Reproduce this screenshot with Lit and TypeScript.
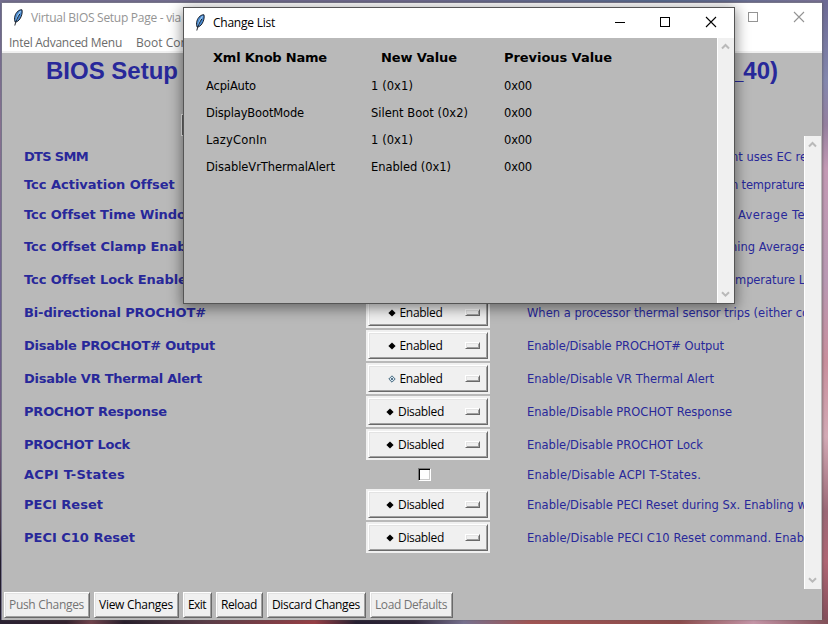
import { LitElement, html, css, svg } from "lit";
import { customElement, property } from "lit/decorators.js";

/** One line of text whose tracking is adjusted to fill a given advance width. */
@customElement("fit-text")
class FitText extends LitElement {
  @property() text = "";
  @property({ type: Number }) w = 0;
  static styles = css`
    :host { display: inline-block; white-space: pre; flex: none; }
    span { display: inline-block; }
  `;
  render() {
    return html`<span>${this.text}</span>`;
  }
  updated() {
    const el = this.renderRoot.querySelector("span")!;
    el.style.letterSpacing = "0px";
    const natural = el.getBoundingClientRect().width;
    if (this.w && this.text.length) {
      el.style.letterSpacing = (this.w - natural) / this.text.length + "px";
    }
  }
}

const t = (text: string, w: number) => html`<fit-text .text=${text} .w=${w}></fit-text>`;

const feather = html`<svg class="feather" width="12" height="18" viewBox="0 0 12 18">
  <path d="M3.200 13.200C1.600 9.500 3 4.500 6 2.200C7.500 1 9 .6 10 .8C10.600 3.500 9.800 7 8 9.800C6.800 11.700 5 13 3.200 13.200Z" fill="#4a8ad0" stroke="#0c1118" stroke-width=".9"/>
  <path d="M8.600 2.200C6.500 4.500 5 8 4.200 11.500" fill="none" stroke="#9ccaf2" stroke-width="1.200"/>
  <path d="M7.800 5C5.500 8.500 3.800 12 2.800 16.500" fill="none" stroke="#0c1118" stroke-width=".9"/>
</svg>`;

const controls = (min: boolean) => html`<svg class="controls" width="110" height="16" viewBox="0 0 110 16" fill="none" stroke="currentColor" shape-rendering="crispEdges">
  ${min ? svg`<path d="M2 8.500H12"/>` : ""}
  <rect x="47.500" y="3.500" width="9" height="9"/>
  <path d="M93 3L103 13M103 3L93 13" shape-rendering="auto" stroke-width="1.100"/>
</svg>`;

const arrow = (down: boolean) => html`<svg width="9" height="7" viewBox="0 0 9 7" fill="none" stroke="#b9b9b9" stroke-width="2">
  <path d=${down ? "M1 1.200L4.500 4.700L8 1.200" : "M1 5.500L4.500 2L8 5.500"}/>
</svg>`;

type Row = { h: number; label: string; w: number; value?: string; pending?: boolean; check?: boolean; desc: string; dw: number; dx?: number };
const rows: Row[] = [
  { h: 28, label: "DTS SMM", w: 64, desc: "nt uses EC re", dw: 76, dx: 204 },
  { h: 28, label: "Tcc Activation Offset", w: 150, desc: "n temprature", dw: 74, dx: 204 },
  { h: 31, label: "Tcc Offset Time Window", w: 173, desc: "Average Te", dw: 67, dx: 211 },
  { h: 33, label: "Tcc Offset Clamp Enable", w: 175, desc: "ning Average", dw: 76, dx: 203 },
  { h: 33, label: "Tcc Offset Lock Enable", w: 162, desc: "mperature L", dw: 70, dx: 208 },
  { h: 33, label: "Bi-directional PROCHOT#", w: 182, value: "Enabled", desc: "When a processor thermal sensor trips (either co", dw: 282 },
  { h: 33, label: "Disable PROCHOT# Output", w: 191, value: "Enabled", desc: "Enable/Disable PROCHOT# Output", dw: 197 },
  { h: 33, label: "Disable VR Thermal Alert", w: 178, value: "Enabled", pending: true, desc: "Enable/Disable VR Thermal Alert", dw: 187 },
  { h: 33, label: "PROCHOT Response", w: 143, value: "Disabled", desc: "Enable/Disable PROCHOT Response", dw: 205 },
  { h: 33, label: "PROCHOT Lock", w: 106, value: "Disabled", desc: "Enable/Disable PROCHOT Lock", dw: 176 },
  { h: 27, label: "ACPI T-States", w: 101, check: true, desc: "Enable/Disable ACPI T-States.", dw: 174 },
  { h: 33, label: "PECI Reset", w: 79, value: "Disabled", desc: "Enable/Disable PECI Reset during Sx. Enabling w", dw: 280 },
  { h: 33, label: "PECI C10 Reset", w: 111, value: "Disabled", desc: "Enable/Disable PECI C10 Reset command. Enab", dw: 277 },
];

const changes: [string, number, string, number][] = [
  ["AcpiAuto", 50, "1 (0x1)", 42],
  ["DisplayBootMode", 98, "Silent Boot (0x2)", 97],
  ["LazyConIn", 61, "1 (0x1)", 42],
  ["DisableVrThermalAlert", 129, "Enabled (0x1)", 80],
];

const actions: [string, number, number, boolean][] = [
  ["Push Changes", 86, 75, true],
  ["View Changes", 85, 74, false],
  ["Exit", 29, 18, false],
  ["Reload", 47, 36, false],
  ["Discard Changes", 99, 88, false],
  ["Load Defaults", 83, 72, true],
];

@customElement("app-root")
class AppRoot extends LitElement {
  static styles = css`
    :host {
      display: block; position: relative; box-sizing: border-box;
      width: 828px; height: 624px; overflow: hidden; padding: 2px 6px 4px 1px;
      background:
        linear-gradient(90deg, #2b2233 0, #33222e 8%, #70434c 11%, #281f2c 15%, #5b3d48 25%, #963f45 38%, #272032 43%, #30263a 50%, #77718f 56%, #a15554 64%, #8b4c4c 82%, #c495a7 91%, #825058 100%) 0 100% / 100% 5px no-repeat,
        linear-gradient(#6c6994 0, #8488ae 13%, #95809f 20%, #c39ab4 27%, #b999b3 45%, #c98f9d 58%, #d3aab5 70%, #9b6876 82%, #af6674 90%, #824d59 100%) 100% 0 / 7px 100% no-repeat,
        linear-gradient(90deg, #756f91, #716c91 50%, #596c93 80%, #7b7296) 0 0 / 100% 3px no-repeat,
        linear-gradient(#68688e, #8a7291 20%, #6e6295 50%, #745b82 70%, #49384b 84%, #211b2b 90%);
      font: 12px "Open Sans", "Noto Sans", sans-serif; color: #000;
    }
    .window { box-sizing: border-box; height: 618px; width: 821px; display: flex; flex-direction: column; background: #b9b9b9; border: 1px solid #77758a; border-bottom: 0; border-right: 0; box-shadow: 1px 0 2px #5558; overflow: hidden; }
    .titlebar { display: flex; align-items: center; background: #fff; }
    .main-title { height: 30px; color: #949494; padding-left: 10px; flex: none; }
    .feather { flex: none; }
    .main-title fit-text { margin: -2px 0 0 7px; }
    .controls { margin-left: auto; flex: none; }
    .main-title .controls { margin: -2px 11px 0 auto; }
    .menubar { height: 20px; flex: none; display: flex; align-items: center; gap: 14px; padding-left: 7px; background: #fff; border-bottom: 2px solid #f0f0f0; box-sizing: border-box; color: #6b6b6b; }
    .heading { height: 36px; flex: none; display: flex; justify-content: space-between; align-items: center; padding: 0 44px; font: bold 24px/34px "Liberation Sans", Arial, sans-serif; color: #28289a; }
    .filter { flex: none; height: 22px; margin: 25px 0 0 179px; width: 200px; box-sizing: border-box; border: 1px solid #eee; border-right: 0; background: #666; }
    .body { flex: none; height: 453px; display: flex; }
    .rows { width: 802px; padding-top: 7px; box-sizing: border-box; overflow: hidden; color: #28289a; }
    .row { display: grid; grid-template-columns: 342px 124px 37px 1fr; align-items: center; padding-left: 22px; }
    .label { font: bold 13px/18px "DejaVu Sans", Verdana, sans-serif; }
    .desc { font: 11.5px/16px "DejaVu Sans", Verdana, sans-serif; grid-column: 4; white-space: nowrap; }
    .h28 { height: 28px; } .h31 { height: 31px; } .h33 { height: 33px; } .h27 { height: 27px; }
    .option { height: 31px; box-sizing: border-box; border: 2px solid #f0f0f0; color: #000; display: flex; }
    .raised { border-style: solid; border-width: 1px; border-color: #fff #696969 #696969 #fff; box-shadow: inset 1px 1px #e3e3e3, inset -1px -1px #a0a0a0; background: #f0f0f0; box-sizing: border-box; }
    .face { flex: 1; display: flex; align-items: center; padding: 0 7px 0 0; }
    .value { flex: 1; display: flex; justify-content: center; align-items: center; gap: 4px; padding-right: 4px; line-height: 16px; }
    .value svg { flex: none; margin-top: 1px; }
    .nub { width: 15px; height: 7px; margin-bottom: 1px; }
    .check { justify-self: center; width: 13px; height: 13px; box-sizing: border-box; border: 1px solid; border-color: #777 #fff #fff #777; box-shadow: inset 1px 1px #000, inset -1px -1px #ccc; background: #fff; margin: 0 0 1px -7px; }
    .scrollbar { width: 17px; box-sizing: border-box; border-left: 1px solid #fff; background: #f0f0f0; display: flex; flex-direction: column; justify-content: space-between; align-items: center; padding: 5px 1px 5px 0; flex: none; }
    .actions { display: flex; gap: 4px; margin-top: 3px; padding-left: 2px; }
    .action { height: 26px; display: flex; justify-content: center; align-items: center; line-height: 16px; flex: none; padding-right: 1px; }
    .disabled { color: #747474; }
    .dialog { position: absolute; left: 183px; top: 7px; width: 552px; height: 297px; box-sizing: border-box; border: 1px solid #555; background: #b9b9b9; box-shadow: 0 3px 13px 1px #0007; display: flex; flex-direction: column; }
    .dialog-title { height: 30px; flex: none; padding-left: 10px; }
    .dialog-title fit-text { margin: -1px 0 0 7px; }
    .dialog-title .controls { margin: -2px 11px 0 auto; }
    .dialog-body { flex: 1; display: flex; }
    .table { flex: 1; display: grid; grid-template-columns: 165px 133px 1fr; grid-template-rows: 29px repeat(4, 27px); padding: 5px 0 0 22px; align-items: center; align-content: start; font: 11.5px/16px "DejaVu Sans", Verdana, sans-serif; }
    .th { font-size: 13px; font-weight: bold; padding-top: 1px; }
    .th1 { padding-left: 7px; } .th2 { padding-left: 10px; }
  `;

  private diamond(pending?: boolean) {
    return pending
      ? html`<svg width="8" height="8" viewBox="0 0 8 8"><path d="M4 .8L7.200 4L4 7.200L.8 4Z" fill="#d8e8f2" stroke="#46687e"/><circle cx="4" cy="4" r="1" fill="#304e66"/></svg>`
      : html`<svg width="8" height="8" viewBox="0 0 8 8"><path d="M4 .4L7.600 4L4 7.600L.4 4Z" fill="#000"/></svg>`;
  }

  render() {
    return html`
      <div class="window">
        <div class="titlebar main-title">${feather}${t("Virtual BIOS Setup Page - via", 150)}${controls(false)}</div>
        <div class="menubar">${t("Intel Advanced Menu", 113)}${t("Boot Con", 52)}</div>
        <div class="heading">${t("BIOS Setup", 132)}${t("_40)", 48)}</div>
        <div class="filter"></div>
        <div class="body">
          <div class="rows">
            ${rows.map(
              (r) => html`<div class="row h${r.h}">
                <div class="label">${t(r.label, r.w)}</div>
                ${r.value
                  ? html`<div class="option"><div class="face raised"><div class="value">${this.diamond(r.pending)}${t(r.value, r.value === "Enabled" ? 43 : 46)}</div><div class="nub raised"></div></div></div>`
                  : ""}
                ${r.check ? html`<div class="check"></div>` : ""}
                <div class="desc" style="padding-left:${r.dx ?? 0}px">${t(r.desc, r.dw)}</div>
              </div>`
            )}
          </div>
          <div class="scrollbar">${arrow(false)}${arrow(true)}</div>
        </div>
        <div class="actions">
          ${actions.map(([text, w, tw, off]) => html`<div class="action raised ${off ? "disabled" : ""}" style="width:${w}px">${t(text, tw)}</div>`)}
        </div>
      </div>
      <div class="dialog">
        <div class="titlebar dialog-title">${feather}${t("Change List", 62)}${controls(true)}</div>
        <div class="dialog-body">
          <div class="table">
            <div class="th th1">${t("Xml Knob Name", 114)}</div>
            <div class="th th2">${t("New Value", 76)}</div>
            <div class="th">${t("Previous Value", 108)}</div>
            ${changes.map(([n, nw, v, vw]) => html`<div>${t(n, nw)}</div><div>${t(v, vw)}</div><div>${t("0x00", 28)}</div>`)}
          </div>
          <div class="scrollbar">${arrow(false)}${arrow(true)}</div>
        </div>
      </div>
    `;
  }
}
